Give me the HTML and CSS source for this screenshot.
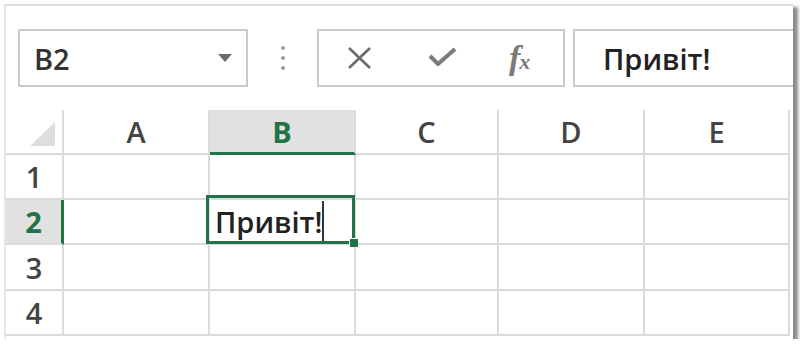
FILE: index.html
```html
<!DOCTYPE html>
<html lang="uk">
<head>
    <title>Excel - B2</title>
    <link rel="stylesheet" href="styles.css">
</head>
<body>
    <div class="window">
        <div class="toolbar">
            <div class="namebox">
                <span>B2</span>
                <svg class="drop" width="14" height="8" viewBox="0 0 14 8"><path d="M0 0 H14 L7 8 Z" fill="#6a6a6a"/></svg>
            </div>
            <div class="dots"><i></i><i></i><i></i></div>
            <div class="fbuttons">
                <svg class="icon-x" width="25" height="22" viewBox="0 0 25 22">
                    <path d="M2 1 L23 21 M23 1 L2 21" stroke="#6b6b6b" stroke-width="2.6" fill="none"/>
                </svg>
                <svg class="icon-ok" width="29" height="19" viewBox="0 0 29 19">
                    <path d="M2 9 L10 17 L27 2" stroke="#7a7a7a" stroke-width="4" fill="none"/>
                </svg>
                <span class="fx"><span class="f">f</span><span class="x">x</span></span>
            </div>
            <div class="fbar">Привіт!</div>
        </div>

        <div class="sheet">
            <div class="cell head corner">
                <svg width="25" height="24" viewBox="0 0 25 24"><path d="M25 0 V24 H0 Z" fill="#dedede"/></svg>
            </div>
            <div class="cell head">A</div>
            <div class="cell head active-col">B</div>
            <div class="cell head">C</div>
            <div class="cell head">D</div>
            <div class="cell head">E</div>

            <div class="cell rowhead">1</div>
            <div class="cell"></div><div class="cell"></div><div class="cell"></div><div class="cell"></div><div class="cell"></div>

            <div class="cell rowhead active-row">2</div>
            <div class="cell"></div>
            <div class="cell selected">
                <span class="value">Привіт!</span><span class="caret"></span>
                <div class="sel-box"></div>
                <div class="handle"></div>
            </div>
            <div class="cell"></div><div class="cell"></div><div class="cell"></div>

            <div class="cell rowhead">3</div>
            <div class="cell"></div><div class="cell"></div><div class="cell"></div><div class="cell"></div><div class="cell"></div>

            <div class="cell rowhead">4</div>
            <div class="cell"></div><div class="cell"></div><div class="cell"></div><div class="cell"></div><div class="cell"></div>
        </div>
    </div>
</body>
</html>
```

FILE: styles.css
```css
body {
    margin: 0;
    background-color: #ffffff;
    font-family: "Open Sans", "Liberation Sans", sans-serif;
    overflow: hidden;
}
.window {
    margin: 4px 0 0 4px;
    width: 787px;
    height: 333px;
    border-top: 2px solid #dcdcdc;
    border-left: 2px solid #e6e6e6;
    background: #ffffff;
    box-shadow: 4px 4px 3px 1px #8c8c8c;
    overflow: hidden;
}
.toolbar {
    display: flex;
    align-items: center;
    padding: 23px 0 0 12px;
    height: 58px;
}
.toolbar > * {
    flex: none;
}
.namebox, .fbuttons, .fbar {
    box-sizing: border-box;
    height: 58px;
    border: 2px solid #cacaca;
    display: flex;
    align-items: center;
}
.namebox {
    width: 230px;
    padding: 0 14px;
    justify-content: space-between;
    font-size: 29px;
    font-weight: 600;
    color: #333;
}
.dots {
    width: 4px;
    margin: 0 32px 0 33px;
    display: flex;
    flex-direction: column;
    gap: 6px;
}
.dots i {
    display: block;
    width: 4px;
    height: 4px;
    border-radius: 50%;
    background: #9c9c9c;
}
.fbuttons {
    width: 248px;
}
.icon-x {
    margin-left: 28px;
}
.icon-ok {
    margin-left: 56px;
    margin-top: -4px;
}
.fx {
    margin-left: 52px;
    font-family: "Liberation Serif", serif;
    font-style: italic;
    font-weight: bold;
    color: #7a7a7a;
    display: flex;
    align-items: baseline;
}
.fx .f {
    font-size: 34px;
}
.fx .x {
    font-size: 22px;
    margin-left: -1px;
}
.fbar {
    width: 260px;
    margin-left: 8px;
    padding-left: 28px;
    font-size: 29px;
    font-weight: 600;
    color: #222;
}
.sheet {
    margin-top: 23px;
    display: grid;
    grid-template-columns: 58px 146px 146px 143px 146px 145px;
    grid-template-rows: 45px 45px 45px 46px 45px;
}
.cell {
    box-sizing: border-box;
    border-right: 2px solid #dadada;
    border-bottom: 2px solid #dadada;
    display: flex;
    align-items: center;
    font-size: 29px;
    font-weight: 600;
    color: #222;
}
.head, .rowhead {
    justify-content: center;
    color: #444;
}
.corner {
    justify-content: flex-end;
    align-items: flex-end;
    padding: 0 7px 7px 0;
}
.active-col {
    background: #e1e1e1;
    color: #217346;
    font-weight: bold;
    border-bottom: 3px solid #217346;
}
.active-row {
    background: #e1e1e1;
    color: #217346;
    font-weight: bold;
    border-right: 3px solid #217346;
}
.selected {
    position: relative;
    padding-left: 5px;
}
.caret {
    display: inline-block;
    width: 2px;
    height: 43px;
    margin: 2px 0 0 0;
    background: #333;
}
.sel-box {
    position: absolute;
    top: -5px;
    left: -4px;
    right: -1px;
    bottom: -1px;
    border: 3px solid #217346;
}
.handle {
    position: absolute;
    right: -4px;
    bottom: -4px;
    width: 8px;
    height: 8px;
    background: #217346;
    border-top: 1px solid #fff;
    border-left: 1px solid #fff;
}
```
